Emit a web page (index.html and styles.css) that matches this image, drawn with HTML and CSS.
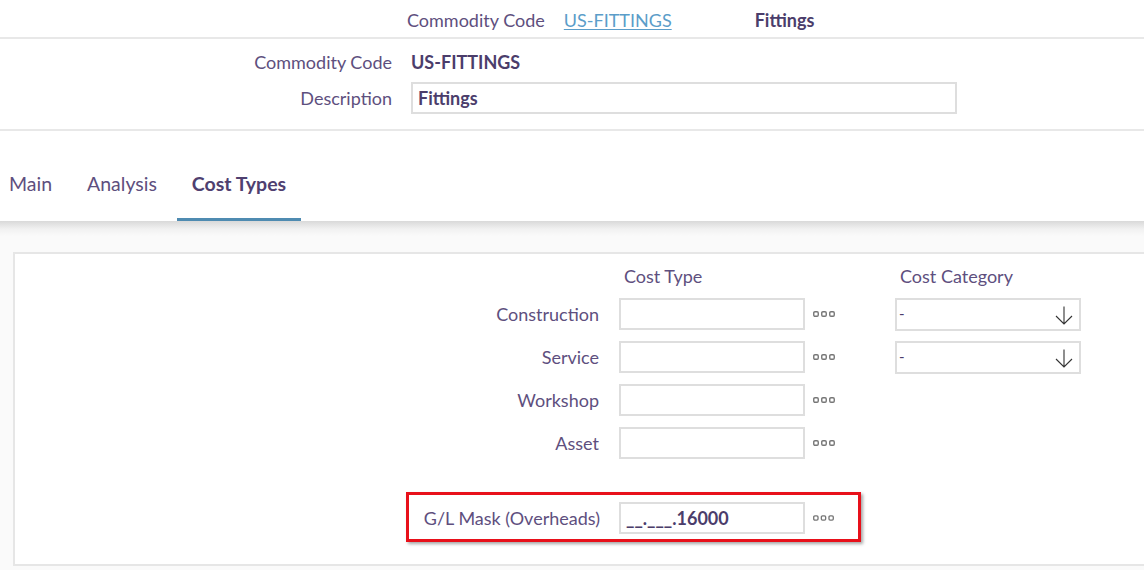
FILE: index.html
```html
<!DOCTYPE html>
<html>
<head>
<meta charset="utf-8">
<link rel="stylesheet" href="styles.css">
</head>
<body>
<div class="topbar">
  <span class="tb-label">Commodity Code</span>
  <a class="tb-link" href="#">US-FITTINGS</a>
  <span class="tb-name">Fittings</span>
</div>
<div class="header">
  <div class="h-label">Commodity Code</div>
  <div class="h-value">US-FITTINGS</div>
  <div class="h-label">Description</div>
  <div class="h-input">Fittings</div>
</div>
<div class="tabs">
  <div class="tab">Main</div>
  <div class="tab">Analysis</div>
  <div class="tab active">Cost Types</div>
</div>
<div class="content">
  <div class="panel">
    <div class="grid">
      <div></div>
      <div class="col-head">Cost Type</div>
      <div></div>
      <div class="col-head">Cost Category</div>

      <div class="row-label">Construction</div>
      <div class="field"></div>
      <div class="dots-cell"><svg class="dots" width="22" height="6" viewBox="0 0 22 6"><rect x="0.75" y="0.75" width="4.5" height="4.5" rx="1.2"/><rect x="8.75" y="0.75" width="4.5" height="4.5" rx="1.2"/><rect x="16.75" y="0.75" width="4.5" height="4.5" rx="1.2"/></svg></div>
      <div class="select"><span>-</span><svg class="arrow" width="18" height="19" viewBox="0 0 18 19"><path d="M9 0.5V18M1 10L9 18L17 10"/></svg></div>

      <div class="row-label">Service</div>
      <div class="field"></div>
      <div class="dots-cell"><svg class="dots" width="22" height="6" viewBox="0 0 22 6"><rect x="0.75" y="0.75" width="4.5" height="4.5" rx="1.2"/><rect x="8.75" y="0.75" width="4.5" height="4.5" rx="1.2"/><rect x="16.75" y="0.75" width="4.5" height="4.5" rx="1.2"/></svg></div>
      <div class="select"><span>-</span><svg class="arrow" width="18" height="19" viewBox="0 0 18 19"><path d="M9 0.5V18M1 10L9 18L17 10"/></svg></div>

      <div class="row-label">Workshop</div>
      <div class="field"></div>
      <div class="dots-cell"><svg class="dots" width="22" height="6" viewBox="0 0 22 6"><rect x="0.75" y="0.75" width="4.5" height="4.5" rx="1.2"/><rect x="8.75" y="0.75" width="4.5" height="4.5" rx="1.2"/><rect x="16.75" y="0.75" width="4.5" height="4.5" rx="1.2"/></svg></div>
      <div></div>

      <div class="row-label">Asset</div>
      <div class="field"></div>
      <div class="dots-cell"><svg class="dots" width="22" height="6" viewBox="0 0 22 6"><rect x="0.75" y="0.75" width="4.5" height="4.5" rx="1.2"/><rect x="8.75" y="0.75" width="4.5" height="4.5" rx="1.2"/><rect x="16.75" y="0.75" width="4.5" height="4.5" rx="1.2"/></svg></div>
      <div></div>
    </div>
    <div class="gl-row">
      <div class="gl-label">G/L Mask (Overheads)</div>
      <div class="field gl-field">__.___.16000</div>
      <div class="dots-cell gl-dots"><svg class="dots" width="22" height="6" viewBox="0 0 22 6"><rect x="0.75" y="0.75" width="4.5" height="4.5" rx="1.2"/><rect x="8.75" y="0.75" width="4.5" height="4.5" rx="1.2"/><rect x="16.75" y="0.75" width="4.5" height="4.5" rx="1.2"/></svg></div>
    </div>
  </div>
</div>
</body>
</html>
```
FILE: styles.css
```css
* { box-sizing: border-box; }
html, body {
  margin: 0;
  padding: 0;
  background: #ffffff;
  overflow: hidden;
}
body {
  width: 1144px;
  height: 570px;
  font-family: Lato, "Open Sans", sans-serif;
  font-size: 18px;
  color: #5e4f7e;
}
.topbar {
  height: 39px;
  border-bottom: 2px solid #e8e8e8;
  display: flex;
  align-items: center;
  padding-left: 407px;
  padding-top: 2px;
}
.tb-label { margin-right: 19px; }
.tb-link {
  color: #5b9dc9;
  text-decoration: underline;
  text-underline-offset: 2px;
  margin-right: 83px;
}
.tb-name { font-weight: 700; color: #4b3d6b; }

.header {
  display: grid;
  grid-template-columns: 392px 546px;
  column-gap: 19px;
  row-gap: 7px;
  padding-top: 10px;
  padding-bottom: 15px;
  border-bottom: 2px solid #e8e8e8;
  align-items: center;
}
.h-label { text-align: right; line-height: 26px; }
.h-value { font-weight: 700; color: #4b3d6b; line-height: 26px; }
.h-input {
  height: 32px;
  border: 2px solid #dedede;
  font-weight: 700;
  color: #4b3d6b;
  padding: 0 5px;
  line-height: 28px;
}

.tabs {
  display: flex;
  margin-left: -6px;
  padding-top: 32px;
  height: 90px;
  font-size: 19.5px;
}
.tab {
  padding: 0 15px 13px;
  line-height: 42px;
  border-bottom: 3px solid transparent;
  margin-right: 5px;
}
.tab.active {
  font-weight: 700;
  color: #4f4070;
  border-bottom-color: #4f8bb1;
}

.content {
  height: 349px;
  background: linear-gradient(to bottom, #d9d9d9 0, #f1f1f1 8px, #fafafa 15px, #fafafa 100%);
  padding-top: 31px;
  padding-left: 13px;
}
.panel {
  background: #ffffff;
  border: 2px solid #e6e6e6;
  margin-right: -20px;
  padding-bottom: 22px;
}
.grid {
  display: grid;
  grid-template-columns: 604px 186px 90px 186px;
  grid-auto-rows: 32px;
  grid-template-rows: 22px;
  row-gap: 11px;
  align-items: center;
  padding-top: 11px;
}
.col-head {
  padding-left: 5px;
  line-height: 22px;
}
.row-label {
  text-align: right;
  padding-right: 20px;
}
.field {
  height: 32px;
  border: 2px solid #dedede;
  background: #fff;
}
.dots-cell {
  padding-left: 8px;
  display: flex;
  align-items: center;
}
.dots {
  display: block;
  fill: none;
  stroke: #777777;
  stroke-width: 1.4;
}
.select {
  height: 33px;
  align-self: start;
  border: 2px solid #dedede;
  display: flex;
  align-items: center;
  justify-content: space-between;
  padding: 0 6px 0 2px;
  font-size: 15px;
  color: #4b3d6b;
}
.select span { margin-top: -3px; }
.arrow {
  display: block;
  fill: none;
  stroke: #333333;
  stroke-width: 1.1;
  margin-top: 1px;
}

.gl-row {
  display: flex;
  align-items: center;
  width: fit-content;
  margin-left: 391px;
  margin-top: 33px;
  border: 3px solid #e8101a;
  padding: 7px 24px 5px 14px;
  box-shadow: 2px 2px 3px rgba(0, 0, 0, 0.35);
}
.gl-label {
  width: 177px;
  text-align: right;
  margin-right: 19px;
  white-space: nowrap;
}
.gl-field {
  width: 186px;
  font-weight: 700;
  color: #4b3d6b;
  padding: 0 5px;
  line-height: 28px;
}
.gl-dots { width: 29px; }
```
